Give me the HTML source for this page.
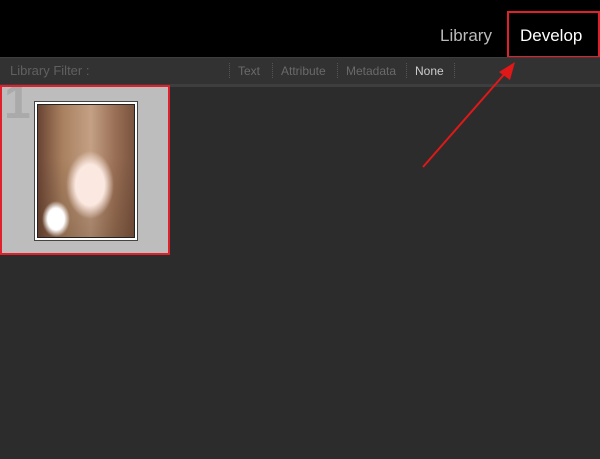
<!DOCTYPE html><html><head><style>
body{margin:0;width:600px;height:459px;background:#2c2c2c;position:relative;overflow:hidden;font-family:"Liberation Sans",sans-serif}
.top{position:absolute;left:0;top:0;width:600px;height:57px;background:#000}
.nav{position:absolute;top:26px;font-size:17px}
.fb{position:absolute;left:0;top:57px;width:600px;height:26px;background:#323232;border-top:1px solid #3d3d3d;border-bottom:3px solid #3e3e3e}
.fb span{position:absolute;top:6px;font-size:12px;color:#6a6a6a}
.sep{position:absolute;top:5px;width:0;height:15px;border-left:1px dotted #555}
</style></head><body>
<div class="top"></div>
<div class="nav" style="left:440px;color:#bbb">Library</div>
<div class="nav" style="left:520px;color:#fff">Develop</div>
<div style="position:absolute;left:507px;top:11px;width:89px;height:43px;border:2px solid #e0202a"></div>
<div class="fb">
<span style="left:10px;font-size:13px;top:5px;color:#606060">Library Filter :</span>
<div class="sep" style="left:229px"></div><span style="left:238px">Text</span>
<div class="sep" style="left:272px"></div><span style="left:281px">Attribute</span>
<div class="sep" style="left:337px"></div><span style="left:346px">Metadata</span>
<div class="sep" style="left:406px"></div><span style="left:415px;color:#ccc">None</span>
<div class="sep" style="left:454px"></div>
</div>
<div style="position:absolute;left:0;top:85px;width:166px;height:166px;border:2px solid #e0202a;background:#bdbdbd;overflow:hidden">
<div style="position:absolute;left:2px;top:-8px;font-size:48px;font-weight:bold;color:#aaa;line-height:1">1</div>
</div>
<div style="position:absolute;left:34px;top:101px;width:102px;height:138px;background:#fff;border:1px solid #444"></div>
<div style="position:absolute;left:37px;top:104px;width:96px;height:132px;border:1px solid #222;background:
radial-gradient(ellipse 24px 34px at 52px 80px,#fbe8e0 60%,rgba(240,210,195,0) 100%),
radial-gradient(ellipse 14px 18px at 18px 114px,#fff 60%,rgba(255,255,255,0) 100%),
linear-gradient(180deg,rgba(0,0,0,0) 40%,rgba(60,35,20,.25)),
linear-gradient(90deg,#6a4434,#a8805f 25%,#c4a084 55%,#9a7055 80%,#7a5440);"></div>
<svg style="position:absolute;left:0;top:0" width="600" height="459">
<line x1="423" y1="167" x2="508" y2="70" stroke="#e01818" stroke-width="2"/>
<polygon points="515,62 499,72 510,80" fill="#e01818"/>
</svg>
</body></html>
